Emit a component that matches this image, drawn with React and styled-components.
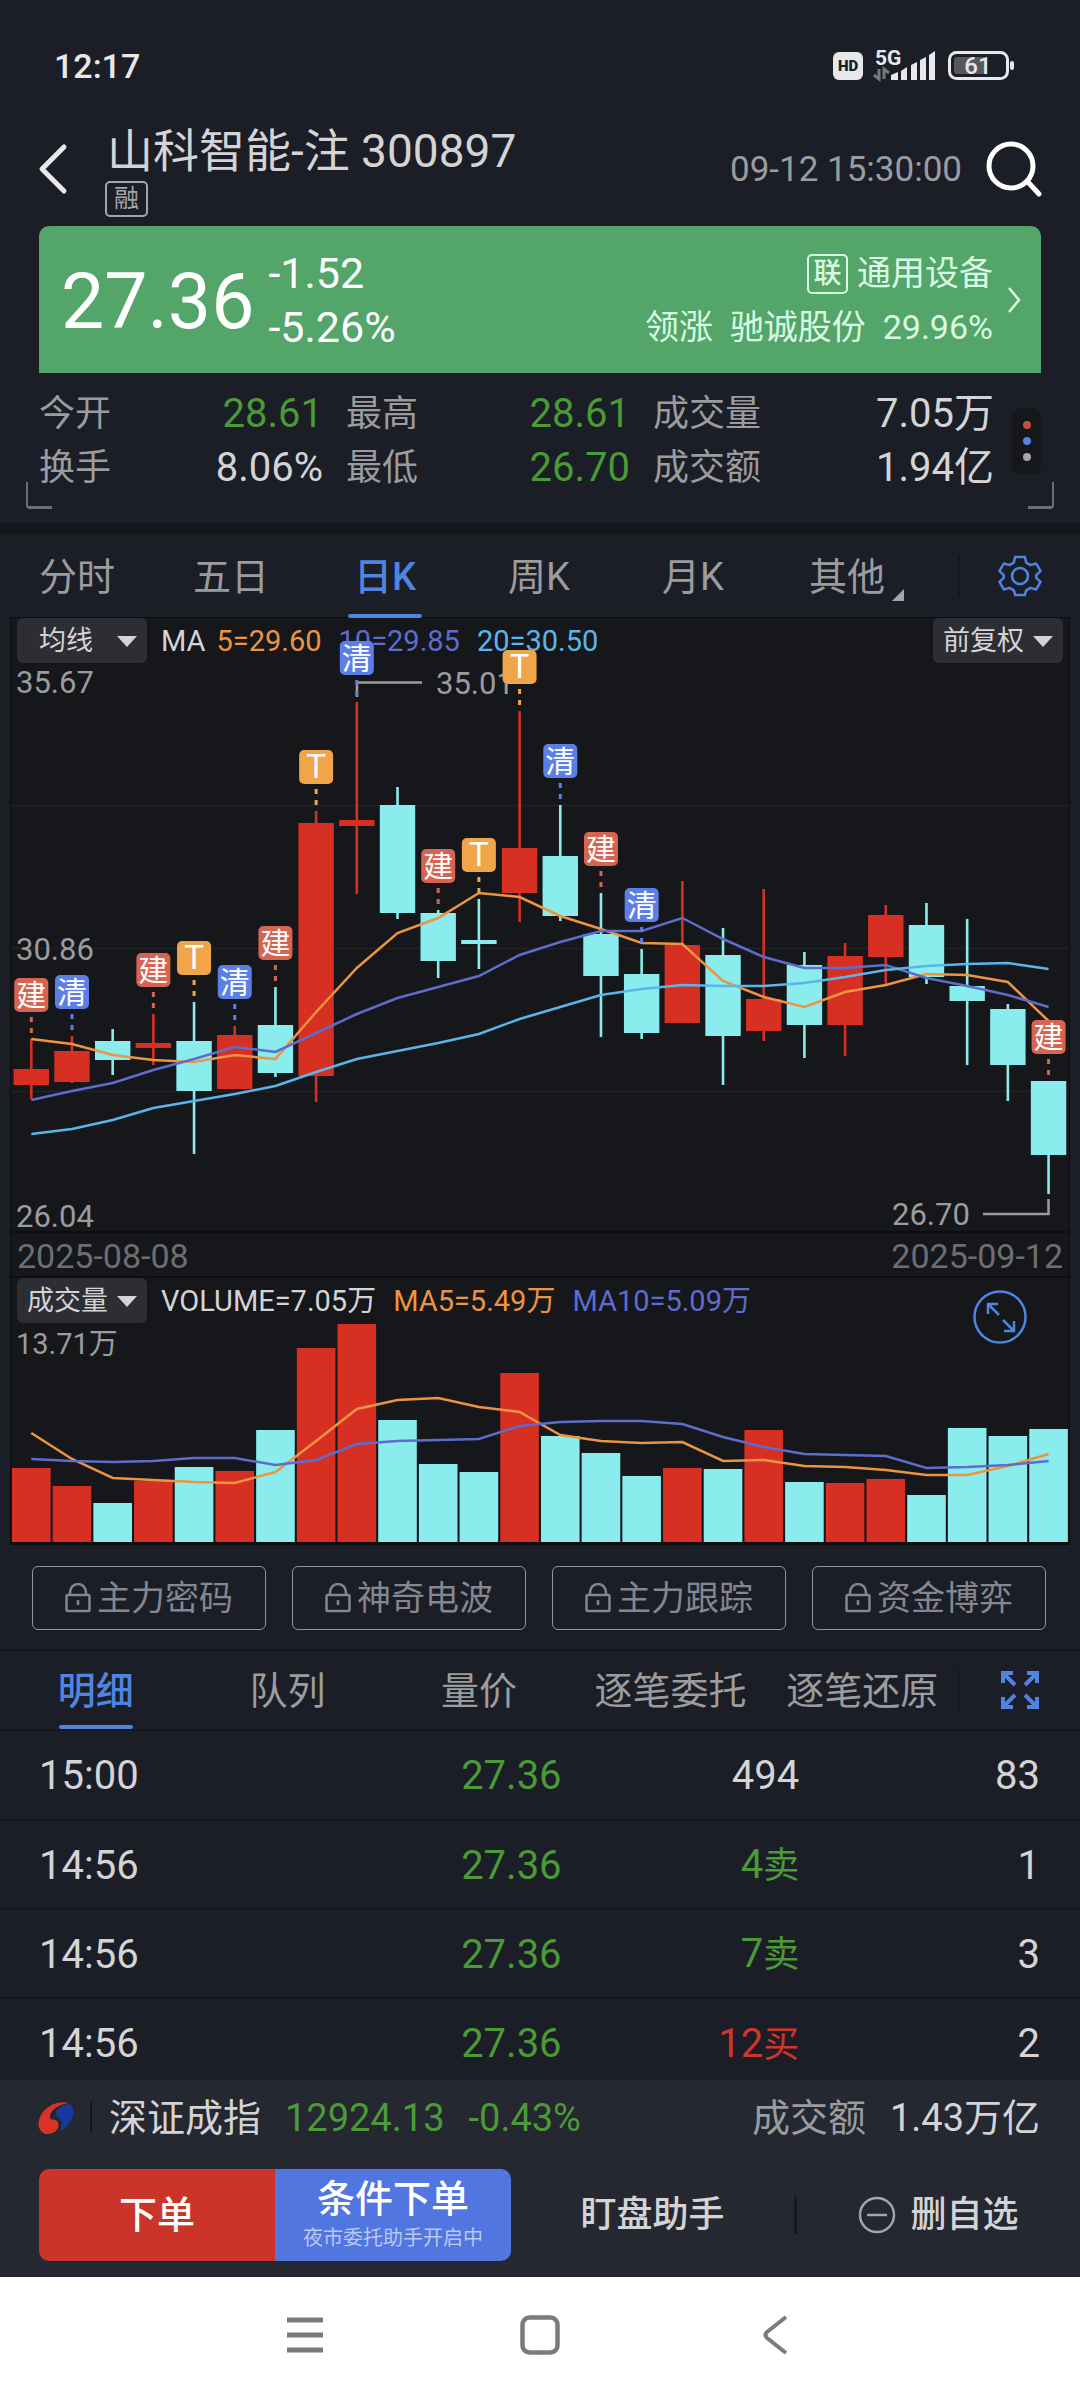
import React from 'react';
import styled, { createGlobalStyle } from 'styled-components';

const GlobalStyle = createGlobalStyle`
  * {
    box-sizing: border-box;
  }

  body {
    margin: 0;
    background: #1b1e26;
    color: #d4d4d6;
    font-family: Roboto, 'Noto Sans CJK SC', sans-serif;
  }

  button, select {
    font-family: inherit;
    color: inherit;
    margin: 0;
    padding: 0;
    border: 0;
    background: none;
  }

  h1 {
    margin: 0;
    font-weight: 400;
  }
`;

/* ---------- data ---------- */

// color, body top, body bottom, high, low
const candles = [
  ['r', 1069, 1085, 1039, 1099],
  ['r', 1051, 1082, 1036, 1083],
  ['c', 1041, 1060, 1029, 1075],
  ['r', 1043, 1048, 1014, 1065],
  ['c', 1041, 1091, 1002, 1154],
  ['r', 1035, 1089, 1026, 1089],
  ['c', 1025, 1073, 987, 1077],
  ['r', 823, 1076, 811, 1102],
  ['r', 820, 826, 702, 894],
  ['c', 805, 913, 787, 919],
  ['c', 913, 961, 910, 978],
  ['c', 940, 944, 899, 969],
  ['r', 848, 893, 711, 922],
  ['c', 856, 916, 805, 921],
  ['c', 934, 976, 893, 1037],
  ['c', 974, 1033, 949, 1039],
  ['r', 945, 1023, 881, 1023],
  ['c', 955, 1036, 928, 1085],
  ['r', 999, 1031, 889, 1041],
  ['c', 965, 1025, 952, 1058],
  ['r', 956, 1025, 943, 1056],
  ['r', 915, 957, 905, 985],
  ['c', 925, 977, 903, 984],
  ['c', 986, 1001, 919, 1065],
  ['c', 1009, 1065, 1004, 1101],
  ['c', 1081, 1155, 1081, 1194],
];

const ma5 = [1039, 1044, 1055, 1060, 1062, 1055, 1059, 1012, 968, 933, 918, 893, 897, 916, 929, 943, 944, 981, 997, 1007, 992, 985, 974, 975, 982, 1021];
const ma10 = [1100, 1091, 1083, 1070, 1059, 1047, 1052, 1033, 1014, 998, 987, 976, 955, 942, 931, 931, 918, 939, 957, 968, 968, 965, 978, 986, 995, 1007];
const ma20 = [1134, 1129, 1120, 1108, 1101, 1094, 1086, 1072, 1059, 1051, 1043, 1034, 1019, 1007, 995, 989, 985, 986, 986, 983, 977, 970, 966, 964, 963, 969];

const marks = [
  [0, '建'], [1, '清'], [3, '建'], [4, 'T'], [5, '清'], [6, '建'], [7, 'T'], [8, '清'],
  [10, '建'], [11, 'T'], [12, 'T'], [13, '清'], [14, '建'], [15, '清'], [25, '建'],
];

const volumes = [1468, 1486, 1503, 1481, 1467, 1471, 1430, 1348, 1324, 1420, 1464, 1472, 1373, 1436, 1453, 1476, 1468, 1469, 1430, 1482, 1483, 1479, 1495, 1428, 1436, 1429];
const vol5 = [1433, 1459, 1478, 1480, 1482, 1483, 1472, 1441, 1409, 1400, 1398, 1407, 1412, 1435, 1441, 1443, 1442, 1461, 1460, 1466, 1467, 1470, 1475, 1475, 1466, 1454];
const vol10 = [1459, 1461, 1462, 1461, 1458, 1458, 1465, 1460, 1444, 1441, 1440, 1439, 1426, 1422, 1421, 1421, 1424, 1437, 1447, 1454, 1455, 1456, 1468, 1467, 1465, 1461];

const stats = [
  ['今开', '28.61', 'green'], ['最高', '28.61', 'green'], ['成交量', '7.05万'],
  ['换手', '8.06%'], ['最低', '26.70', 'green'], ['成交额', '1.94亿'],
];

const trades = [
  ['15:00', '27.36', '494', '', '83'],
  ['14:56', '27.36', '4卖', 'green', '1'],
  ['14:56', '27.36', '7卖', 'green', '3'],
  ['14:56', '27.36', '12买', 'red', '2'],
];

const colors = { green: '#4a9a36', red: '#cf3529' };
const fill = { r: '#d72f22', c: '#8aecec' };
const markFill = { 建: '#d66450', 清: '#5b7fe6', T: '#f0a548' };

const cx = (i) => 31.3 + i * 40.69;
const points = (list) => list.map((y, i) => `${cx(i)},${y}`).join(' ');

/* ---------- top of the page ---------- */

const Page = styled.div`
  background: #1b1e26;
`;

const StatusBar = styled.div`
  display: flex;
  align-items: center;
  justify-content: space-between;
  height: 118px;
  padding: 14px 64px 0 54px;
  font-size: 34px;
  font-weight: 500;
  color: #e8e8ea;
`;

const Header = styled.header`
  display: flex;
  align-items: center;
  height: 108px;
  padding: 0 38px 6px;
`;

const IconButton = styled.button`
  display: flex;
  cursor: pointer;
`;

const TitleBlock = styled.div`
  flex: 1;
  padding-left: 37px;
`;

const Title = styled.h1`
  font-size: 46px;
  line-height: 60px;
  padding-left: 2px;
`;

const Tag = styled.span`
  display: block;
  width: 43px;
  height: 36px;
  border: 2px solid #a5a5a8;
  border-radius: 5px;
  color: #a5a5a8;
  font-size: 25px;
  line-height: 31px;
  text-align: center;
`;

const Time = styled.time`
  font-size: 35px;
  color: #9c9c9f;
  margin-right: 24px;
`;

const QuoteCard = styled.section`
  display: flex;
  align-items: center;
  height: 147px;
  margin: 0 39px;
  padding: 0 20px 0 22px;
  border-radius: 10px 10px 0 0;
  background: #53a569;
  color: #fff;
`;

const Price = styled.div`
  padding-top: 4px;
  font-size: 77px;
  line-height: 90px;
`;

const Change = styled.div`
  flex: 1;
  padding-left: 14px;
  font-size: 43px;
  line-height: 54px;
`;

const Sector = styled.div`
  padding-right: 14px;
  font-size: 34px;
  line-height: 54px;
  text-align: right;
  color: #d9fbe3;
`;

const SectorTag = styled.span`
  display: inline-block;
  width: 41px;
  height: 40px;
  margin-right: 9px;
  border: 2px solid #d9fbe3;
  border-radius: 5px;
  font-size: 28px;
  font-weight: 500;
  line-height: 35px;
  text-align: center;
  vertical-align: 2px;
`;

const Stats = styled.section`
  display: flex;
  align-items: center;
  height: 150px;
  margin: 0 26px;
  padding: 0 13px 14px;
  position: relative;

  &::before, &::after {
    content: '';
    position: absolute;
    bottom: 14px;
    width: 24px;
    height: 24px;
    border-bottom: 3px solid #6d6f73;
  }

  &::before {
    left: 0;
    border-left: 2px solid #6d6f73;
    border-bottom-left-radius: 4px;
  }

  &::after {
    right: 0;
    border-right: 2px solid #6d6f73;
    border-bottom-right-radius: 4px;
  }
`;

const StatGrid = styled.dl`
  flex: 1;
  display: grid;
  grid-template-columns: 284fr 284fr 341fr;
  column-gap: 23px;
  margin: 0 18px 0 0;
`;

const Stat = styled.div`
  display: flex;
  justify-content: space-between;
  line-height: 54px;
`;

const StatLabel = styled.dt`
  font-size: 36px;
  color: #9c9c9f;
`;

const StatValue = styled.dd`
  margin: 0;
  font-size: 40px;
  color: ${(p) => colors[p.$tone] || '#d4d4d6'};
`;

const MoreDots = styled.button`
  width: 29px;
  height: 66px;
  display: flex;
  flex-direction: column;
  align-items: center;
  justify-content: center;
  gap: 8px;
  border-radius: 8px;
  background: #15171b;
`;

const Dot = styled.i`
  width: 8px;
  height: 8px;
  border-radius: 50%;
  background: ${(p) => p.$color};
`;

const Band = styled.div`
  height: 11px;
  background: #15171b;
`;

/* ---------- tabs ---------- */

const TabRow = styled.nav`
  display: flex;
  align-items: center;
  height: ${(p) => p.$height}px;
  border-top: ${(p) => (p.$lined ? '2px solid #15171b' : '0')};
  border-bottom: ${(p) => (p.$lined ? '2px solid #15171b' : '0')};
`;

const Tabs = styled.div`
  flex: 1;
  align-self: stretch;
  display: grid;
  grid-template-columns: repeat(${(p) => p.$count}, 1fr);
  padding-right: ${(p) => p.$pad || 0}px;
`;

const Tab = styled.button`
  position: relative;
  padding-top: 2px;
  font-size: 38px;
  line-height: 52px;
  white-space: nowrap;
  cursor: pointer;
  color: ${(p) => (p.$active ? '#4f84e0' : '#9c9c9f')};
  font-weight: ${(p) => (p.$active ? 500 : 400)};

  &::after {
    content: '';
    display: ${(p) => (p.$active ? 'block' : 'none')};
    position: absolute;
    left: 50%;
    bottom: 0;
    width: 74px;
    height: 4px;
    margin-left: -37px;
    border-radius: 2px;
    background: #4f84e0;
  }
`;

const Corner = styled.i`
  position: absolute;
  right: 20px;
  bottom: 17px;
  border-bottom: 12px solid #a5a5a8;
  border-left: 12px solid transparent;
`;

const TabTool = styled.button`
  width: 122px;
  height: 40px;
  display: flex;
  align-items: center;
  justify-content: center;
  border-left: 2px solid #15171b;
  color: #4f84e0;
`;

/* ---------- charts ---------- */

const ChartFrame = styled.section`
  margin: 0 11px;
  background: #15171b;
  outline: 1px solid #0c0d10;
`;

const Panel = styled.div`
  display: grid;
  border-bottom: 2px solid #0c0d10;

  > * {
    grid-area: 1 / 1;
  }
`;

const Drawing = styled.svg`
  display: block;
  width: 100%;
  overflow: visible;
  pointer-events: none;
`;

const LegendRow = styled.div`
  display: flex;
  align-items: center;
  height: 45px;
  padding: 0 6px;
  font-size: 29px;
  line-height: 40px;
`;

const SelectBox = styled.label`
  position: relative;
  display: block;
  width: 130px;
  height: 45px;
  border-radius: 6px;
  background: #2d2e33;
  margin-left: ${(p) => (p.$end ? 'auto' : '0')};
  margin-right: ${(p) => (p.$end ? '0' : '14px')};

  select {
    appearance: none;
    width: 100%;
    height: 100%;
    padding-left: ${(p) => p.$indent}px;
    font-size: 27px;
  }

  &::after {
    content: '';
    position: absolute;
    right: 10px;
    top: 18px;
    border: 10px solid transparent;
    border-top: 11px solid #d4d4d6;
    border-bottom: 0;
    pointer-events: none;
  }
`;

const Legend = styled.span`
  margin-right: ${(p) => p.$gap}px;
  color: ${(p) => p.$color};
`;

const DateRow = styled.div`
  display: flex;
  justify-content: space-between;
  height: 45px;
  padding: 0 6px;
  border-bottom: 2px solid #0c0d10;
  font-size: 34px;
  line-height: 47px;
  color: #6d6e72;
`;

const LockRow = styled.div`
  display: grid;
  grid-template-columns: repeat(4, 1fr);
  gap: 26px;
  padding: 22px 34px 19px 32px;
`;

const LockButton = styled.button`
  display: flex;
  align-items: center;
  justify-content: center;
  gap: 6px;
  height: 64px;
  border: 1px solid #9293a0;
  border-radius: 6px;
  color: #85868f;
  font-size: 34px;
  line-height: 40px;
`;

/* ---------- trades and footer ---------- */

const TradeList = styled.div`
  height: 349px;
  overflow: hidden;
`;

const TradeTable = styled.table`
  width: 100%;
  table-layout: fixed;
  border-collapse: collapse;
  font-size: 40px;
  line-height: 48px;
`;

const TradeRow = styled.tr`
  height: 89px;

  & + & {
    border-top: 2px solid #15171b;
  }
`;

const Cell = styled.td`
  width: ${(p) => p.$width};
  padding: ${(p) => (p.$left ? '2px 0 0 39px' : `2px ${p.$right || 0}px 0 0`)};
  text-align: ${(p) => (p.$left ? 'left' : 'right')};
  color: ${(p) => colors[p.$tone] || '#d4d4d6'};
`;

const Hanzi = styled.span`
  font-size: 36px;
`;

const Footer = styled.footer`
  background: #252731;
`;

const IndexRow = styled.div`
  display: flex;
  align-items: center;
  height: 76px;
  padding: 0 40px 0 38px;
  font-size: 38px;
  line-height: 32px;
`;

const IndexName = styled.span`
  margin-left: 16px;
  padding-left: 17px;
  border-left: 2px solid #15171b;
`;

const IndexValue = styled.span`
  margin-left: 24px;
  color: ${colors.green};
`;

const Turnover = styled.span`
  margin-left: auto;
  color: #9c9c9f;
`;

const TurnoverValue = styled.span`
  margin-left: 24px;
`;

const ActionRow = styled.div`
  display: flex;
  align-items: center;
  padding: 13px 0 16px 39px;
`;

const OrderButton = styled.button`
  width: 236px;
  height: 92px;
  background: ${(p) => (p.$blue ? '#5276df' : '#cb3429')};
  border-radius: ${(p) => (p.$blue ? '0 10px 10px 0' : '10px 0 0 10px')};
  color: #fff;
  font-size: 38px;
  font-weight: 500;
  line-height: 46px;
`;

const OrderNote = styled.small`
  display: block;
  font-size: 20px;
  font-weight: 400;
  line-height: 32px;
  color: #b9c8f5;
`;

const PlainAction = styled.button`
  flex: 1;
  display: flex;
  align-items: center;
  justify-content: center;
  gap: 14px;
  font-size: 36px;
  font-weight: 500;
  line-height: 38px;

  & + & {
    border-left: 3px solid #16181d;
  }
`;

const NavBar = styled.div`
  display: flex;
  justify-content: center;
  gap: 195px;
  height: 124px;
  padding-bottom: 8px;
  background: #fff;
`;

const NavButton = styled.button`
  width: 40px;
  display: flex;
  align-items: center;
  justify-content: center;
`;

/* ---------- icons ---------- */

const StatusIcons = () => (
  <svg width="184" height="40" viewBox="832 46 184 40" fill="#e8e8ea">
    <rect x="833" y="52" width="30" height="28" rx="6" />
    <text x="848" y="71" fontSize="15" fontWeight="900" textAnchor="middle" fill="#1b1e26">HD</text>
    <text x="875" y="65" fontSize="21" fontWeight="700">5G</text>
    <path d="M879 69v10l-5-4M884 79v-10l5 4" fill="none" stroke="#77787d" strokeWidth="3" />
    <path d="M891 75l7-3v8h-7zM901 71l6-4v13h-6zM911 65l6-3v18h-6zM920 60l6-3v23h-6zM929 55l6-4v29h-6z" />
    <rect x="949.5" y="52.500" width="58" height="26" rx="7" fill="none" stroke="#e8e8ea" strokeWidth="3" />
    <rect x="954" y="57" width="32" height="17" rx="3" fill="#56585e" />
    <rect x="1010" y="61" width="4" height="9" rx="2" />
    <text x="978" y="74" fontSize="24" fontWeight="500" textAnchor="middle">61</text>
  </svg>
);

const BackIcon = () => (
  <svg width="30" height="52" viewBox="0 0 30 52" fill="none" stroke="#e8e8ea" strokeWidth="5" strokeLinecap="round" strokeLinejoin="round">
    <path d="M26 4L4 26l22 22" />
  </svg>
);

const SearchIcon = () => (
  <svg width="56" height="56" viewBox="0 0 56 56" fill="none" stroke="#fff" strokeWidth="5" strokeLinecap="round">
    <circle cx="25" cy="25" r="22" />
    <path d="M41 40l12 13" />
  </svg>
);

const GearIcon = () => (
  <svg width="44" height="44" viewBox="0 0 44 44" fill="none" stroke="currentColor" strokeWidth="2.600" strokeLinejoin="round">
    <path d="M17 2h10l1.500 6 4.500 2.600 6-1.700 4.500 8-4.500 4.200v2.800l4.500 4.200-4.500 8-6-1.700-4.500 2.600L27 42H17l-1.500-5-4.500-2.600-6 1.700-4.500-8L5 23.900v-2.800L.5 16.900l4.500-8 6 1.700L15.500 8z" transform="translate(1 1) scale(.955)" />
    <circle cx="22" cy="22" r="8" />
  </svg>
);

const ExpandIcon = () => (
  <svg width="38" height="38" viewBox="0 0 38 38" fill="none" stroke="currentColor" strokeWidth="4">
    <path d="M2 12V2h10M26 2h10v10M36 26v10H26M12 36H2V26M2 2l12 12M36 2L24 14M36 36L24 24M2 36l12-12" />
  </svg>
);

const LockIcon = () => (
  <svg width="26" height="30" viewBox="0 0 26 30" fill="none" stroke="currentColor" strokeWidth="2.500">
    <rect x="1.500" y="12" width="23" height="16" rx="1" />
    <path d="M5 12V9a8 8 0 0 1 16 0v3M13 17v5" />
  </svg>
);

const ExchangeLogo = () => (
  <svg width="36" height="34" viewBox="0 0 36 34">
    <path d="M31 2C20-1 8 5 3 14c-6 11 0 20 8 19 8-1 12-8 8-13-3-3-6 0-7-3C11 9 22 3 31 2z" fill="#dc3328" />
    <path d="M31 3c8 5 5 18-8 27 0-4 1-7 0-10-1-4-5-3-5-8 0-4 5-8 13-9z" fill="#17399c" />
  </svg>
);

/* ---------- chart drawings ---------- */

const KLine = () => (
  <Drawing viewBox="11 618 1058 613" role="img" aria-label="日K">
    <path d="M11 805.500H1069M11 948.500H1069M11 1091.500H1069" stroke="#212327" strokeWidth="1.500" />
    {candles.map(([c, top, bottom, high, low], i) => (
      <g key={i} fill={fill[c]}>
        <rect x={cx(i) - 1.3} y={high} width="2.600" height={low - high} />
        <rect x={cx(i) - 17.7} y={top} width="35.400" height={bottom - top} />
      </g>
    ))}
    <g fill="none" strokeWidth="2.500">
      <polyline points={points(ma5)} stroke="#ee9440" />
      <polyline points={points(ma10)} stroke="#5e6ccb" />
      <polyline points={points(ma20)} stroke="#5ab6ea" />
    </g>
    <g fill="#9c9c9f" fontSize="31">
      <text x="16" y="693">35.67</text>
      <text x="16" y="960">30.86</text>
      <text x="16" y="1227">26.04</text>
      <text x="436" y="694">35.01</text>
      <text x="892" y="1225">26.70</text>
    </g>
    <path d="M357 697V682.500H422M983 1214H1048.500V1199" fill="none" stroke="#9c9c9f" strokeWidth="2.500" />
    {marks.map(([i, text]) => {
      const top = candles[i][3] - 61;
      return (
        <g key={i}>
          <path d={`M${cx(i)} ${top + 39}v17`} stroke={markFill[text]} strokeWidth="3" strokeDasharray="5 6" />
          <rect x={cx(i) - 17} y={top} width="34" height="34" rx="5" fill={markFill[text]} />
          <text x={cx(i)} y={top + 28} fontSize={text === 'T' ? 33 : 30} textAnchor="middle" fill="#fff">{text}</text>
        </g>
      );
    })}
  </Drawing>
);

const VolumeChart = () => (
  <Drawing viewBox="11 1278 1058 264" role="img" aria-label="成交量">
    {volumes.map((y, i) => (
      <rect key={i} x={cx(i) - 19.3} y={y} width="38.600" height={1542 - y} fill={fill[candles[i][0]]} />
    ))}
    <g fill="none" strokeWidth="2.500">
      <polyline points={points(vol5)} stroke="#ee9440" />
      <polyline points={points(vol10)} stroke="#5e6ccb" />
    </g>
    <text x="16" y="1354" fontSize="29" fill="#9c9c9f">13.71万</text>
    <g fill="none" stroke="#4f84e0" strokeWidth="2.500">
      <circle cx="1000" cy="1317" r="25.500" />
      <path d="M988 1314v-10h10M988 1304l11 11M1014 1321v10h-10M1014 1331l-11-11" />
    </g>
  </Drawing>
);

const Picker = ({ label, value, indent, end }) => (
  <SelectBox $indent={indent} $end={end}>
    <select aria-label={label} defaultValue={value}>
      <option>{value}</option>
    </select>
  </SelectBox>
);

const App = () => {
  return (
    <Page>
      <GlobalStyle />

      <StatusBar>
        <span>12:17</span>
        <StatusIcons />
      </StatusBar>

      <Header>
        <IconButton aria-label="返回"><BackIcon /></IconButton>
        <TitleBlock>
          <Title>山科智能-注 300897</Title>
          <Tag>融</Tag>
        </TitleBlock>
        <Time>09-12 15:30:00</Time>
        <IconButton aria-label="搜索"><SearchIcon /></IconButton>
      </Header>

      <QuoteCard>
        <Price>27.36</Price>
        <Change>
          <div>-1.52</div>
          <div>-5.26%</div>
        </Change>
        <Sector>
          <div><SectorTag>联</SectorTag>通用设备</div>
          <div>领涨&nbsp; 驰诚股份&nbsp; 29.96%</div>
        </Sector>
        <svg width="14" height="28" viewBox="0 0 14 28" fill="none" stroke="#d9fbe3" strokeWidth="2.500">
          <path d="M2 2l10 12L2 26" />
        </svg>
      </QuoteCard>

      <Stats>
        <StatGrid>
          {stats.map(([label, value, tone]) => (
            <Stat key={label}>
              <StatLabel>{label}</StatLabel>
              <StatValue $tone={tone}>{value}</StatValue>
            </Stat>
          ))}
        </StatGrid>
        <MoreDots aria-label="更多">
          <Dot $color="#c0503c" />
          <Dot $color="#4f84e0" />
          <Dot $color="#a5a5a8" />
        </MoreDots>
      </Stats>

      <Band />

      <TabRow $height={84}>
        <Tabs $count={6} $pad={34}>
          {['分时', '五日', '日K', '周K', '月K', '其他'].map((name) => (
            <Tab key={name} $active={name === '日K'}>
              {name}
              {name === '其他' && <Corner />}
            </Tab>
          ))}
        </Tabs>
        <TabTool aria-label="设置"><GearIcon /></TabTool>
      </TabRow>

      <ChartFrame>
        <Panel>
          <LegendRow>
            <Picker label="指标" value="均线" indent={22} />
            <Legend $color="#d4d4d6" $gap={11}>MA</Legend>
            <Legend $color="#ee9440" $gap={17}>5=29.60</Legend>
            <Legend $color="#5e6ccb" $gap={17}>10=29.85</Legend>
            <Legend $color="#5ab6ea" $gap={0}>20=30.50</Legend>
            <Picker label="复权" value="前复权" indent={10} end />
          </LegendRow>
          <KLine />
        </Panel>
        <DateRow>
          <span>2025-08-08</span>
          <span>2025-09-12</span>
        </DateRow>
        <Panel>
          <LegendRow>
            <Picker label="副图" value="成交量" indent={10} />
            <Legend $color="#d4d4d6" $gap={17}>VOLUME=7.05万</Legend>
            <Legend $color="#ee9440" $gap={17}>MA5=5.49万</Legend>
            <Legend $color="#5e6ccb" $gap={0}>MA10=5.09万</Legend>
          </LegendRow>
          <VolumeChart />
        </Panel>
      </ChartFrame>

      <LockRow>
        {['主力密码', '神奇电波', '主力跟踪', '资金博弈'].map((name) => (
          <LockButton key={name}><LockIcon />{name}</LockButton>
        ))}
      </LockRow>

      <TabRow $height={82} $lined>
        <Tabs $count={5}>
          {['明细', '队列', '量价', '逐笔委托', '逐笔还原'].map((name) => (
            <Tab key={name} $active={name === '明细'}>{name}</Tab>
          ))}
        </Tabs>
        <TabTool aria-label="展开"><ExpandIcon /></TabTool>
      </TabRow>

      <TradeList>
        <TradeTable>
          <tbody>
            {trades.map(([time, price, lots, tone, count], i) => (
              <TradeRow key={i}>
                <Cell $left $width="27%">{time}</Cell>
                <Cell $width="25%" $tone="green">{price}</Cell>
                <Cell $width="22%" $tone={tone}>
                  {lots.replace(/\D/g, '')}
                  {tone && <Hanzi>{lots.replace(/\d/g, '')}</Hanzi>}
                </Cell>
                <Cell $width="26%" $right={40}>{count}</Cell>
              </TradeRow>
            ))}
          </tbody>
        </TradeTable>
      </TradeList>

      <Footer>
        <IndexRow>
          <ExchangeLogo />
          <IndexName>深证成指</IndexName>
          <IndexValue>12924.13</IndexValue>
          <IndexValue>-0.43%</IndexValue>
          <Turnover>成交额</Turnover>
          <TurnoverValue>1.43万亿</TurnoverValue>
        </IndexRow>
        <ActionRow>
          <OrderButton>下单</OrderButton>
          <OrderButton $blue>
            条件下单
            <OrderNote>夜市委托助手开启中</OrderNote>
          </OrderButton>
          <PlainAction>盯盘助手</PlainAction>
          <PlainAction>
            <svg width="38" height="38" viewBox="0 0 38 38" fill="none" stroke="#a5a5a8" strokeWidth="2.500">
              <circle cx="19" cy="19" r="17" />
              <path d="M9 19h20" />
            </svg>
            删自选
          </PlainAction>
        </ActionRow>
      </Footer>

      <NavBar>
        <NavButton aria-label="最近任务">
          <svg width="38" height="38" viewBox="0 0 38 38" stroke="#7b7b7b" strokeWidth="5">
            <path d="M1 4h36M1 19h36M1 34h36" />
          </svg>
        </NavButton>
        <NavButton aria-label="主页">
          <svg width="40" height="40" viewBox="0 0 40 40" fill="none" stroke="#7b7b7b" strokeWidth="4.500">
            <rect x="2.500" y="2.500" width="35" height="35" rx="7" />
          </svg>
        </NavButton>
        <NavButton aria-label="返回上一页">
          <svg width="26" height="40" viewBox="0 0 26 40" fill="none" stroke="#7b7b7b" strokeWidth="4" strokeLinejoin="round">
            <path d="M24 2L5 17q-3 3 0 6l19 15" />
          </svg>
        </NavButton>
      </NavBar>
    </Page>
  );
};

export default App;
